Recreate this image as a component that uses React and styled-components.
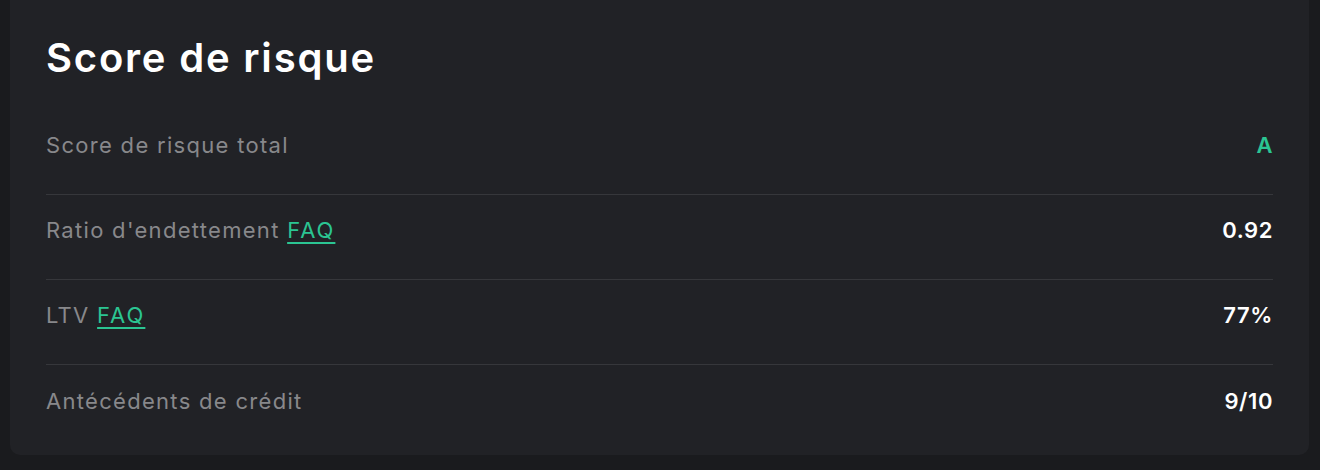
import React from 'react';
import styled, { createGlobalStyle } from 'styled-components';

const GlobalStyle = createGlobalStyle`
    html, body {
        margin: 0;
        padding: 0;
        background: #1a1b1e;
    }
    body {
        font-family: Inter, "Noto Sans", sans-serif;
        -webkit-font-smoothing: antialiased;
    }
`;

const Page = styled.div`
    padding: 0 11px 16px 10px;
    height: 470px;
    box-sizing: border-box;
`;

const Card = styled.section`
    background: #212226;
    border-radius: 0 0 10px 10px;
    padding: 34px 36px 5px 36px;
`;

const Title = styled.h2`
    margin: 0 0 28px 0;
    color: #ffffff;
    font-size: 40px;
    line-height: 48px;
    font-weight: 600;
    letter-spacing: 1.8px;
`;

const List = styled.div`
    display: flex;
    flex-direction: column;
`;

const Row = styled.div`
    display: flex;
    justify-content: space-between;
    align-items: center;
    height: 85px;
    box-sizing: border-box;
    padding: 23px 0 37px 0;
    border-bottom: ${p => (p.last ? 'none' : '1px solid #36373b')};
    font-size: 22px;
    line-height: 24px;
    letter-spacing: 1.3px;
`;

const Label = styled.span`
    color: #88888b;
`;

const Faq = styled.a`
    color: #2bc592;
    text-decoration: underline;
    text-decoration-thickness: 2px;
    text-underline-offset: 4px;
    letter-spacing: 2px;
    cursor: pointer;
`;

const Value = styled.span`
    color: ${p => (p.accent ? '#2bc592' : '#ffffff')};
    font-weight: 600;
    letter-spacing: 0.6px;
`;

const rows = [
    { label: 'Score de risque total', value: 'A', accent: true },
    { label: "Ratio d'endettement", faq: true, value: '0.92' },
    { label: 'LTV', faq: true, value: '77%' },
    { label: 'Antécédents de crédit', value: '9/10' },
];

const App = () => {
    return (
        <Page>
            <GlobalStyle />
            <Card>
                <Title>Score de risque</Title>
                <List>
                    {rows.map((row, i) => (
                        <Row key={row.label} last={i === rows.length - 1}>
                            <Label>
                                {row.label}
                                {row.faq && <> <Faq>FAQ</Faq></>}
                            </Label>
                            <Value accent={row.accent}>{row.value}</Value>
                        </Row>
                    ))}
                </List>
            </Card>
        </Page>
    );
};

export default App;
